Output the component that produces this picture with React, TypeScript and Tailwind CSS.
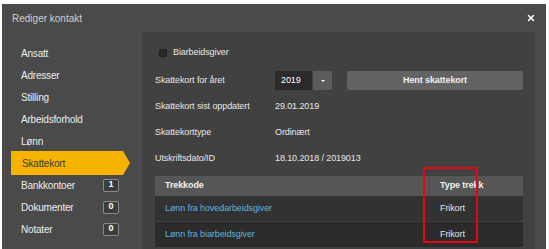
import { X } from "lucide-react";

const menu = [
  { label: "Ansatt" },
  { label: "Adresser" },
  { label: "Stilling" },
  { label: "Arbeidsforhold" },
  { label: "Lønn" },
  { label: "Skattekort", active: true },
  { label: "Bankkontoer", badge: "1" },
  { label: "Dokumenter", badge: "0" },
  { label: "Notater", badge: "0" },
];

const info = [
  { label: "Skattekort sist oppdatert", value: "29.01.2019" },
  { label: "Skattekorttype", value: "Ordinært" },
  { label: "Utskriftsdato/ID", value: "18.10.2018 / 2019013" },
];

const rows = [
  { code: "Lønn fra hovedarbeidsgiver", type: "Frikort", bg: "bg-[#323232]" },
  { code: "Lønn fra biarbeidsgiver", type: "Frikort", bg: "bg-[#2b2b2b]" },
];

export default function App() {
  return (
    <div className="relative w-[549px] h-[249px] overflow-hidden bg-white pt-[4px] pl-[2px] pr-[3px] font-['Liberation_Sans',Arial,sans-serif]">
      <div className="flex flex-col h-full bg-[#4a4a4a]">
        {/* header */}
        <div className="flex items-center justify-between h-[28px] pl-[10px] pr-[10px] shrink-0">
          <span className="text-[10px] text-[#cfcfcf]">Rediger kontakt</span>
          <X size={10} strokeWidth={3.5} className="text-white" />
        </div>

        <div className="flex flex-1 min-h-0">
          {/* sidebar */}
          <div className="w-[140px] shrink-0 pt-[10px] pl-[9px]">
            {menu.map((m) =>
              m.active ? (
                <div
                  key={m.label}
                  className="flex items-center h-[24px] -my-px w-[119px] pl-[11px] bg-[#f6b400] text-[10px] tracking-[-0.2px] text-[#3a3a3a] [clip-path:polygon(0_0,calc(100%-7px)_0,100%_50%,calc(100%-7px)_100%,0_100%)]"
                >
                  {m.label}
                </div>
              ) : (
                <div
                  key={m.label}
                  className="flex items-center justify-between h-[22px] w-[112px] pl-[10px] pr-[4px] text-[10px] tracking-[-0.2px] text-[#ececec]"
                >
                  <span>{m.label}</span>
                  {m.badge && (
                    <span className="flex items-center justify-center w-[16px] h-[13px] border border-[#8a8a8a] rounded-[2px] bg-[#3c3c3c] text-[9px] font-bold text-white">
                      {m.badge}
                    </span>
                  )}
                </div>
              )
            )}
          </div>

          {/* content */}
          <div className="flex-1 bg-[#414141] pt-[11px] pl-[13px] pr-[12px] text-[9px] tracking-[-0.1px] text-[#e6e6e6]">
            <div className="flex items-center h-[20px] pl-[4px] gap-[6px]">
              <span className="w-[8px] h-[8px] bg-[#2a2a2a] border border-[#222] rounded-[1px]" />
              <span>Biarbeidsgiver</span>
            </div>

            <div className="flex items-center h-[19px] mt-[8px]">
              <span className="w-[120px]">Skattekort for året</span>
              <div className="flex items-center h-full w-[37px] pl-[6px] bg-[#2a2a2a] text-white">2019</div>
              <div className="flex items-center justify-center h-full w-[19px] ml-px bg-[#5c5c5c] rounded-r-[2px]">
                <span className="w-0 h-0 border-l-[2px] border-r-[2px] border-t-[2px] border-l-transparent border-r-transparent border-t-white" />
              </div>
              <button className="flex-1 h-full ml-[15px] bg-[#636363] rounded-[2px] font-bold text-[#f0f0f0]">
                Hent skattekort
              </button>
            </div>

            <div className="mt-[4px]">
              {info.map((r) => (
                <div key={r.label} className="flex items-center h-[26px]">
                  <span className="w-[120px]">{r.label}</span>
                  <span>{r.value}</span>
                </div>
              ))}
            </div>

            <div className="mt-[4px]">
              <div className="flex h-[20px] bg-[#565656] font-bold text-[#f2f2f2]">
                <div className="flex items-center w-[275px] pl-[10px] border-r border-[#4a4a4a]">Trekkode</div>
                <div className="flex items-center flex-1 pl-[10px]">Type trekk</div>
              </div>
              {rows.map((r) => (
                <div key={r.code} className={`flex h-[26px] border-b border-[#3f3f3f] ${r.bg}`}>
                  <div className="flex items-center w-[275px] pl-[10px] text-[#5db3dc]">{r.code}</div>
                  <div className="flex items-center flex-1 pl-[10px] text-[#e4e4e4]">{r.type}</div>
                </div>
              ))}
            </div>
          </div>
          <div className="w-[11px] shrink-0" />
        </div>
      </div>

      {/* annotation */}
      <div className="absolute left-[423px] top-[167px] w-[55px] h-[76px] border-2 border-[#e30613]" />
    </div>
  );
}
